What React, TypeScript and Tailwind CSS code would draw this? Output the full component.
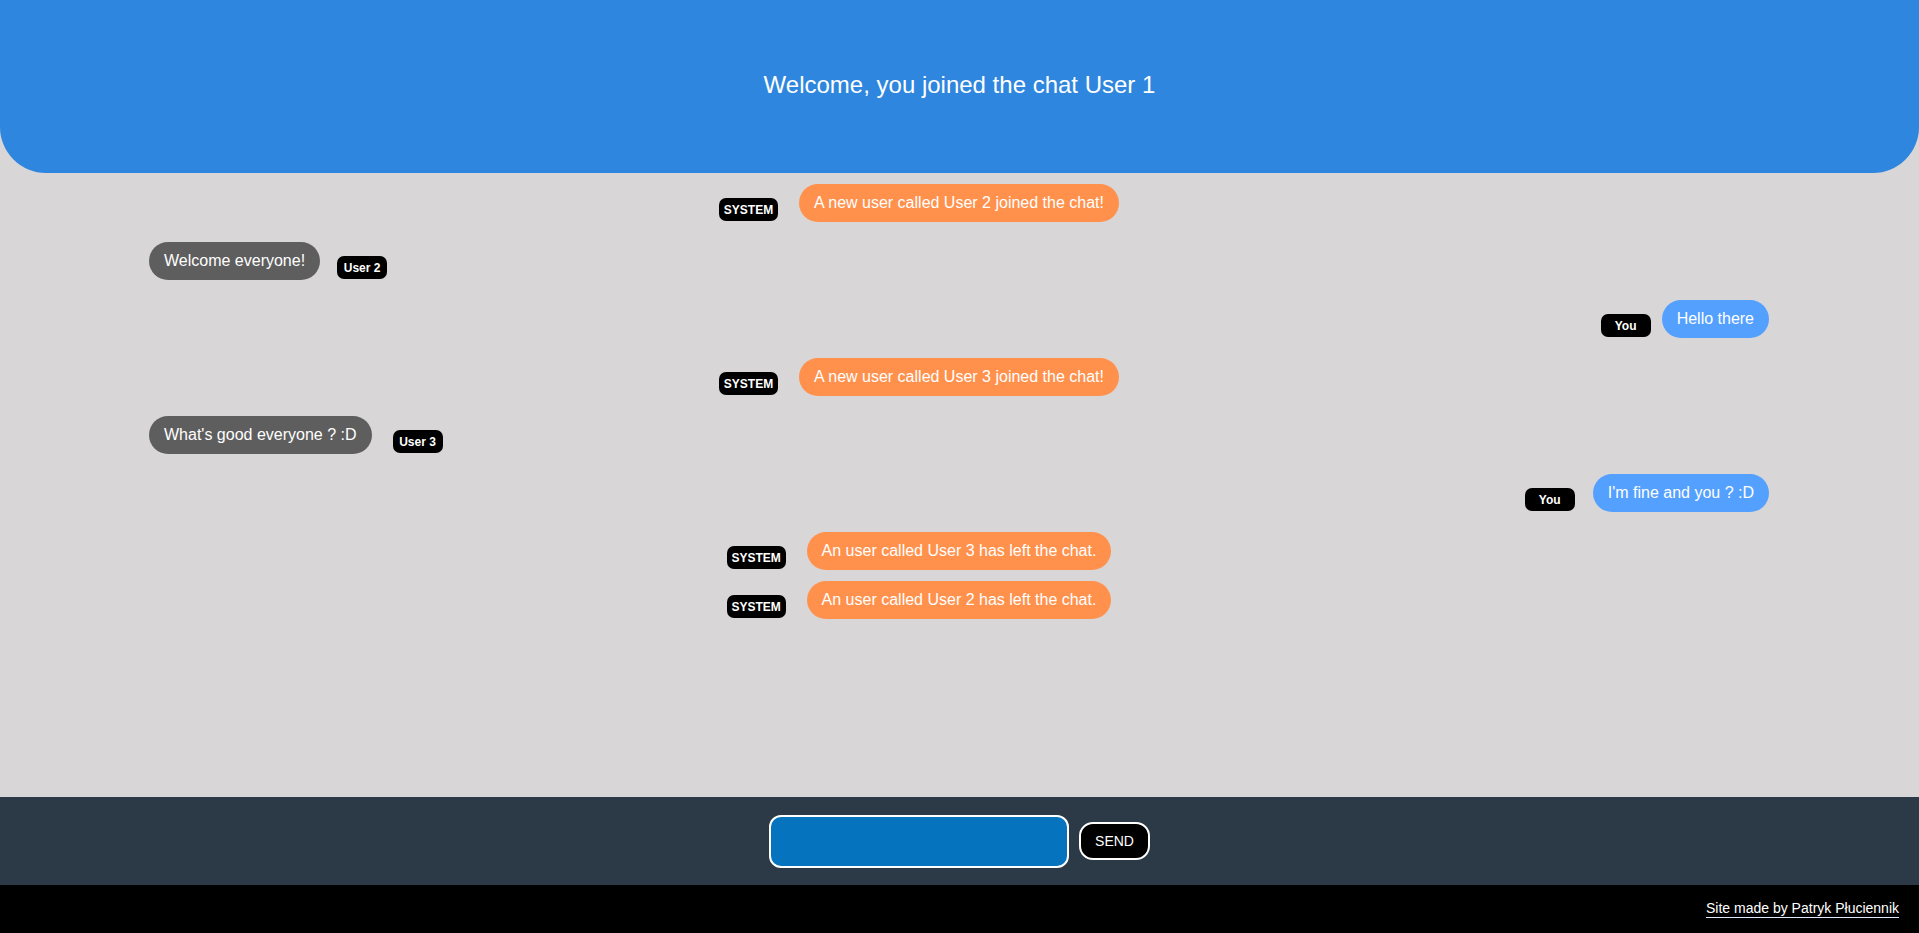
import React from 'react'

type Msg = {
  kind: 'system' | 'other' | 'you'
  text: string
  author: string
  gap: number
  top: string
}

const messages: Msg[] = [
  { kind: 'system', text: 'A new user called User 2 joined the chat!', author: 'SYSTEM', gap: 21, top: 'mt-[11px]' },
  { kind: 'other', text: 'Welcome everyone!', author: 'User 2', gap: 17, top: 'mt-[20px]' },
  { kind: 'you', text: 'Hello there', author: 'You', gap: 11, top: 'mt-[20px]' },
  { kind: 'system', text: 'A new user called User 3 joined the chat!', author: 'SYSTEM', gap: 21, top: 'mt-[20px]' },
  { kind: 'other', text: "What's good everyone ? :D", author: 'User 3', gap: 21, top: 'mt-[20px]' },
  { kind: 'you', text: "I'm fine and you ? :D", author: 'You', gap: 18, top: 'mt-[20px]' },
  { kind: 'system', text: 'An user called User 3 has left the chat.', author: 'SYSTEM', gap: 21, top: 'mt-[20px]' },
  { kind: 'system', text: 'An user called User 2 has left the chat.', author: 'SYSTEM', gap: 21, top: 'mt-[11px]' },
]

function Badge({ label, system }: { label: string; system: boolean }) {
  return (
    <span
      className={`flex h-[23px] items-center justify-center rounded-[7px] bg-black text-[12px] font-bold text-white mb-[1px] ${
        system ? 'w-[59px]' : 'w-[50px]'
      }`}
    >
      {label}
    </span>
  )
}

function Bubble({ msg }: { msg: Msg }) {
  const color =
    msg.kind === 'system' ? 'bg-[#ff914d]' : msg.kind === 'you' ? 'bg-[#54a0ff]' : 'bg-[#5e5e5e]'
  return (
    <div className={`rounded-full px-[15px] py-[10px] text-[16px] leading-[18px] text-white ${color}`}>
      {msg.text}
    </div>
  )
}

function Row({ msg }: { msg: Msg }) {
  if (msg.kind === 'system') {
    return (
      <div className={`flex items-end justify-center pr-[80px] ${msg.top}`}>
        <Badge label={msg.author} system />
        <div style={{ width: msg.gap }} />
        <Bubble msg={msg} />
      </div>
    )
  }
  if (msg.kind === 'you') {
    return (
      <div className={`flex items-end justify-end ${msg.top}`}>
        <Badge label={msg.author} system={false} />
        <div style={{ width: msg.gap }} />
        <Bubble msg={msg} />
      </div>
    )
  }
  return (
    <div className={`flex items-end justify-start ${msg.top}`}>
      <Bubble msg={msg} />
      <div style={{ width: msg.gap }} />
      <Badge label={msg.author} system={false} />
    </div>
  )
}

export default function App() {
  return (
    <div className="flex h-screen flex-col bg-[#d8d6d7] font-['Liberation_Sans',Arial,sans-serif]">
      {/* Header */}
      <header className="flex h-[173px] shrink-0 items-center justify-center rounded-b-[46px] bg-[#2e86de] pb-[3px]">
        <h1 className="text-[24px] text-white">Welcome, you joined the chat User 1</h1>
      </header>

      {/* Messages */}
      <main className="flex flex-1 flex-col overflow-hidden pl-[149px] pr-[150px]">
        {messages.map((m, i) => (
          <Row key={i} msg={m} />
        ))}
      </main>

      {/* Input bar */}
      <div className="flex h-[88px] shrink-0 items-center justify-center gap-[10px] bg-[#2c3a47]">
        <input
          type="text"
          className="h-[53px] w-[300px] rounded-[12px] border-2 border-white bg-[#0573be] px-3 text-white outline-none"
        />
        <button className="h-[38px] w-[71px] rounded-[14px] border-2 border-white bg-black text-[14px] text-white">
          SEND
        </button>
      </div>

      {/* Footer */}
      <footer className="flex h-[48px] shrink-0 items-center justify-end bg-black pr-[20px]">
        <a className="border-b border-[#dfe9ff] pb-[1px] text-[14px] leading-[16px] text-white">
          Site made by Patryk Płuciennik
        </a>
      </footer>
    </div>
  )
}
